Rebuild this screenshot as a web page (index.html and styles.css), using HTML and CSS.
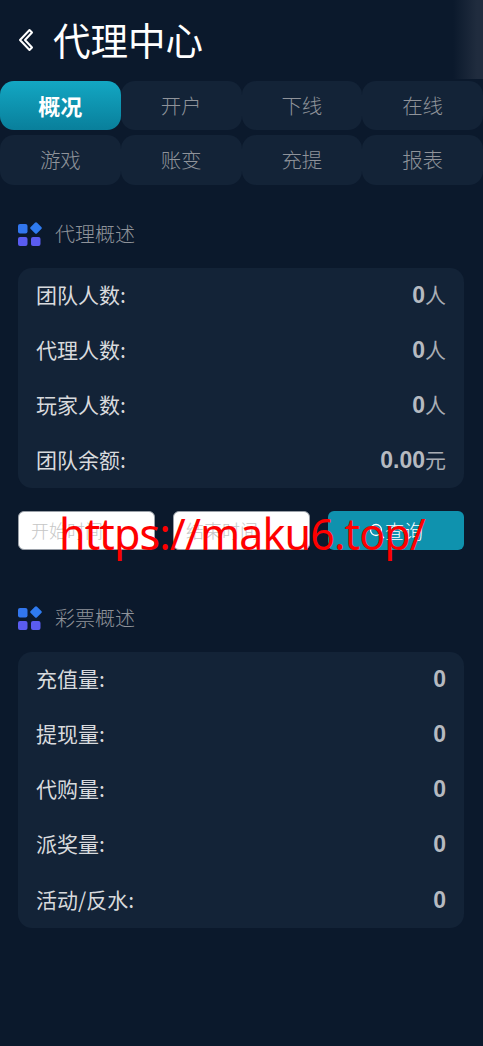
FILE: index.html
```html
<!DOCTYPE html>
<html lang="zh">
<head>
<meta charset="utf-8">
<title>代理中心</title>
<link rel="stylesheet" href="styles.css">
</head>
<body>
<div class="page">
  <header class="topbar">
    <svg class="back" viewBox="0 0 16 24" width="16" height="24"><path d="M11.500 2 2 12l9.500 10 2.500-2.500L7 12l7-7.500Z" fill="none" stroke="#fff" stroke-width="2" stroke-linejoin="round"/></svg>
    <h1>代理中心</h1>
    <div class="fade"></div>
  </header>
  <nav class="tabs">
    <a class="tab active">概况</a><a class="tab">开户</a><a class="tab">下线</a><a class="tab">在线</a>
    <a class="tab">游戏</a><a class="tab">账变</a><a class="tab">充提</a><a class="tab">报表</a>
  </nav>
  <section class="sec first">
    <div class="sec-head">
      <svg class="grid-icon" viewBox="0 0 24 24" width="24" height="24"><rect x="0" y="2" width="9.500" height="9.500" rx="2" fill="#3276ee"/><rect x="13.500" y="1.500" width="9" height="9" rx="1.500" fill="#2f7bf0" transform="rotate(45 18 6)"/><rect x="0" y="15" width="9.500" height="9" rx="2" fill="#5a5cf0"/><rect x="13" y="15" width="9.500" height="9" rx="2" fill="#5a5cf0"/></svg>
      <span>代理概述</span>
    </div>
    <div class="card">
      <div class="row"><span>团队人数:</span><span class="val"><b>0</b>人</span></div>
      <div class="row"><span>代理人数:</span><span class="val"><b>0</b>人</span></div>
      <div class="row"><span>玩家人数:</span><span class="val"><b>0</b>人</span></div>
      <div class="row"><span>团队余额:</span><span class="val"><b>0.00</b>元</span></div>
    </div>
  </section>
  <div class="query">
    <div class="field">开始时间</div>
    <div class="field">结束时间</div>
    <button class="btn"><svg viewBox="0 0 16 16" width="16" height="16"><circle cx="7" cy="7" r="5.500" fill="none" stroke="#fff" stroke-width="1.300"/><path d="m11 11 4 4" stroke="#fff" stroke-width="1.300"/></svg>查询</button>
  </div>
  <section class="sec second">
    <div class="sec-head">
      <svg class="grid-icon" viewBox="0 0 24 24" width="24" height="24"><rect x="0" y="2" width="9.500" height="9.500" rx="2" fill="#3276ee"/><rect x="13.500" y="1.500" width="9" height="9" rx="1.500" fill="#2f7bf0" transform="rotate(45 18 6)"/><rect x="0" y="15" width="9.500" height="9" rx="2" fill="#5a5cf0"/><rect x="13" y="15" width="9.500" height="9" rx="2" fill="#5a5cf0"/></svg>
      <span>彩票概述</span>
    </div>
    <div class="card">
      <div class="row"><span>充值量:</span><span class="val"><b>0</b></span></div>
      <div class="row"><span>提现量:</span><span class="val"><b>0</b></span></div>
      <div class="row"><span>代购量:</span><span class="val"><b>0</b></span></div>
      <div class="row"><span>派奖量:</span><span class="val"><b>0</b></span></div>
      <div class="row"><span>活动/反水:</span><span class="val"><b>0</b></span></div>
    </div>
  </section>
  <div class="watermark">https://maku6.top/</div>
</div>
</body>
</html>
```
FILE: styles.css
```css
* { box-sizing: border-box; }
html, body { margin: 0; padding: 0; }
body {
  background: #0b192c;
  font-family: "Liberation Sans", "Noto Sans CJK SC", sans-serif;
  color: #d5d8dc;
}
.page { position: relative; width: 483px; height: 1046px; overflow: hidden; }
.topbar {
  position: relative;
  display: flex;
  align-items: center;
  height: 79px;
  padding: 0 0 0 18px;
  margin-bottom: 2px;
}
.back { flex: none; }
.topbar h1 {
  margin: 0 0 2px 19px;
  font-size: 37.500px;
  line-height: 77px;
  font-weight: 400;
  color: #fff;
  font-family: "Noto Sans CJK SC", sans-serif;
}
.fade {
  position: absolute;
  right: 0;
  top: 0;
  width: 30px;
  height: 79px;
  background: linear-gradient(to right, rgba(32,44,62,0), #202c3e 80%);
}
.tabs {
  display: grid;
  grid-template-columns: repeat(4, 1fr);
  grid-template-rows: 49px 50px;
  row-gap: 5px;
}
.tab {
  display: flex;
  align-items: center;
  justify-content: center;
  padding-bottom: 2px;
  background: #132337;
  border-radius: 14px;
  color: #8f939a;
  font-size: 20.500px;
  font-family: "Noto Sans CJK SC", sans-serif;
  font-weight: 300;
}
.tab.active {
  background: linear-gradient(to bottom, #13a7c3, #097f9b);
  color: #fff;
  font-size: 22px;
  font-weight: 700;
}
.sec { padding: 0 19px 0 18px; }
.sec.first { margin-top: 35px; }
.sec.second { margin-top: 54px; }
.sec-head {
  display: flex;
  align-items: center;
  height: 28px;
  margin-bottom: 20px;
  color: #8f939a;
  font-size: 20px;
  font-family: "Noto Sans CJK SC", sans-serif;
  font-weight: 300;
}
.sec-head span { margin-bottom: 2px; }
.grid-icon { flex: none; margin-right: 13px; }
.card {
  background: #132337;
  border-radius: 14px;
  padding: 0 18px;
  font-family: "Noto Sans CJK SC", sans-serif;
}
.row {
  display: flex;
  justify-content: space-between;
  align-items: center;
  height: 55.250px;
  padding-bottom: 4px;
  font-size: 21px;
  color: #d8dadd;
  font-weight: 400;
}
.val { color: #a9adb4; }
.val b {
  font-family: "Liberation Sans", sans-serif;
  font-size: 23px;
  font-weight: 700;
  color: #b6bac0;
}
.first .card { height: 220px; }
.query {
  display: flex;
  justify-content: space-between;
  padding: 0 19px 0 18px;
  margin-top: 23px;
  height: 39px;
}
.field {
  width: 137px;
  height: 39px;
  background: #fff;
  border: 1px solid #9aa0a8;
  border-radius: 6px;
  padding-left: 12px;
  color: #c6c6c6;
  font-size: 18px;
  line-height: 37px;
  font-family: "Noto Sans CJK SC", sans-serif;
  font-weight: 300;
}
.btn {
  width: 136px;
  height: 39px;
  border: 0;
  border-radius: 6px;
  background: #0f92ae;
  color: #fff;
  font-size: 19px;
  font-family: "Noto Sans CJK SC", sans-serif;
  font-weight: 300;
  display: flex;
  align-items: center;
  justify-content: center;
  padding: 0;
}
.watermark {
  position: absolute;
  left: 59px;
  top: 504px;
  font-family: "Noto Sans", sans-serif;
  font-size: 43px;
  letter-spacing: -0.900px;
  line-height: 60px;
  color: #ff0000;
  white-space: nowrap;
}
```
